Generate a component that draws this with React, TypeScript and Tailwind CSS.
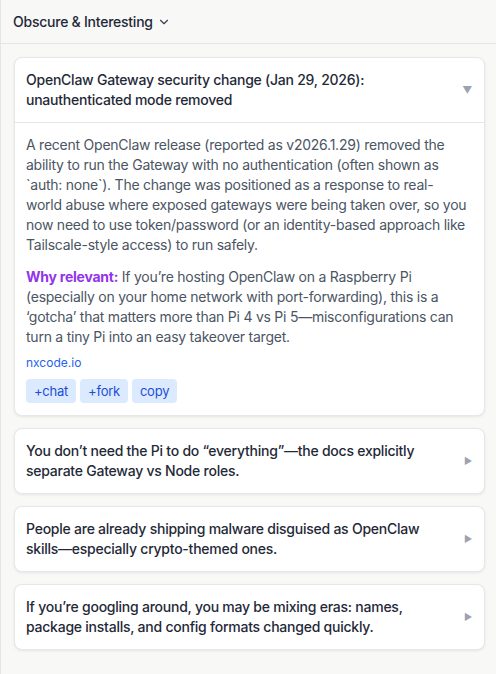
import { ChevronDown } from "lucide-react";

const collapsed = [
  "You don’t need the Pi to do “everything”—the docs explicitly separate Gateway vs Node roles.",
  "People are already shipping malware disguised as OpenClaw skills—especially crypto-themed ones.",
  "If you’re googling around, you may be mixing eras: names, package installs, and config formats changed quickly.",
];

export default function App() {
  return (
    <div
      className="min-h-[674px] border-l border-[#e5e5e3] bg-[#f8f8f7] tracking-[-0.015em] text-[#1f2937]"
      style={{ fontFamily: "Inter, 'Noto Sans', sans-serif" }}
    >
      {/* Section header */}
      <div className="flex h-[44px] items-center gap-1 border-b border-[#e5e5e3] pl-3">
        <span className="text-[14px] font-medium text-[#1f2937]">Obscure &amp; Interesting</span>
        <ChevronDown className="h-3.5 w-3.5 text-[#374151]" strokeWidth={2} />
      </div>

      <div className="flex flex-col gap-3 pl-[13px] pr-[11px] pt-[13px]">
        {/* Expanded card */}
        <div className="rounded-lg border border-[#e5e7eb] bg-white shadow-[0_1px_3px_rgba(0,0,0,0.08)]">
          <div className="flex items-center justify-between border-b border-[#e5e7eb] py-3 pl-[11px] pr-3">
            <p className="pr-6 text-[14px] font-medium leading-5 text-[#1f2937]">
              OpenClaw Gateway security change (Jan 29, 2026): unauthenticated mode removed
            </p>
            <span className="text-[10px] text-[#9ca3af]">▼</span>
          </div>
          <div className="pb-3 pl-[11px] pr-[16px] pt-3">
            <p className="text-[14px] leading-5 text-[#4b5563]">
              A recent OpenClaw release (reported as v2026.1.29) removed the ability to run the Gateway with no
              authentication (often shown as `auth: none`). The change was positioned as a response to real-world
              abuse where exposed gateways were being taken over, so you now need to use token/password (or an
              identity-based approach like Tailscale-style access) to run safely.
            </p>
            <p className="mt-3 text-[14px] leading-5 text-[#4b5563]">
              <span className="font-bold text-[#9333ea]">Why relevant:</span> If you’re hosting OpenClaw on a
              Raspberry Pi (especially on your home network with port-forwarding), this is a ‘gotcha’ that matters
              more than Pi 4 vs Pi 5—misconfigurations can turn a tiny Pi into an easy takeover target.
            </p>
            <a className="mt-2 block text-[12px] leading-4 tracking-normal text-[#2563eb]">nxcode.io</a>
            <div className="mt-2 flex gap-1">
              {["+chat", "+fork", "copy"].map((b) => (
                <button
                  key={b}
                  className="h-6 rounded bg-[#dbeafe] px-2 text-[13px] leading-6 text-[#1d4ed8]"
                >
                  {b}
                </button>
              ))}
            </div>
          </div>
        </div>

        {collapsed.map((t) => (
          <div
            key={t}
            className="flex items-center justify-between rounded-lg border border-[#e5e7eb] bg-white py-3 pl-[11px] pr-3 shadow-[0_1px_3px_rgba(0,0,0,0.08)]"
          >
            <p className="pr-6 text-[14px] font-medium leading-5 text-[#1f2937]">{t}</p>
            <span className="text-[9px] text-[#9ca3af]">▶</span>
          </div>
        ))}
      </div>
    </div>
  );
}
